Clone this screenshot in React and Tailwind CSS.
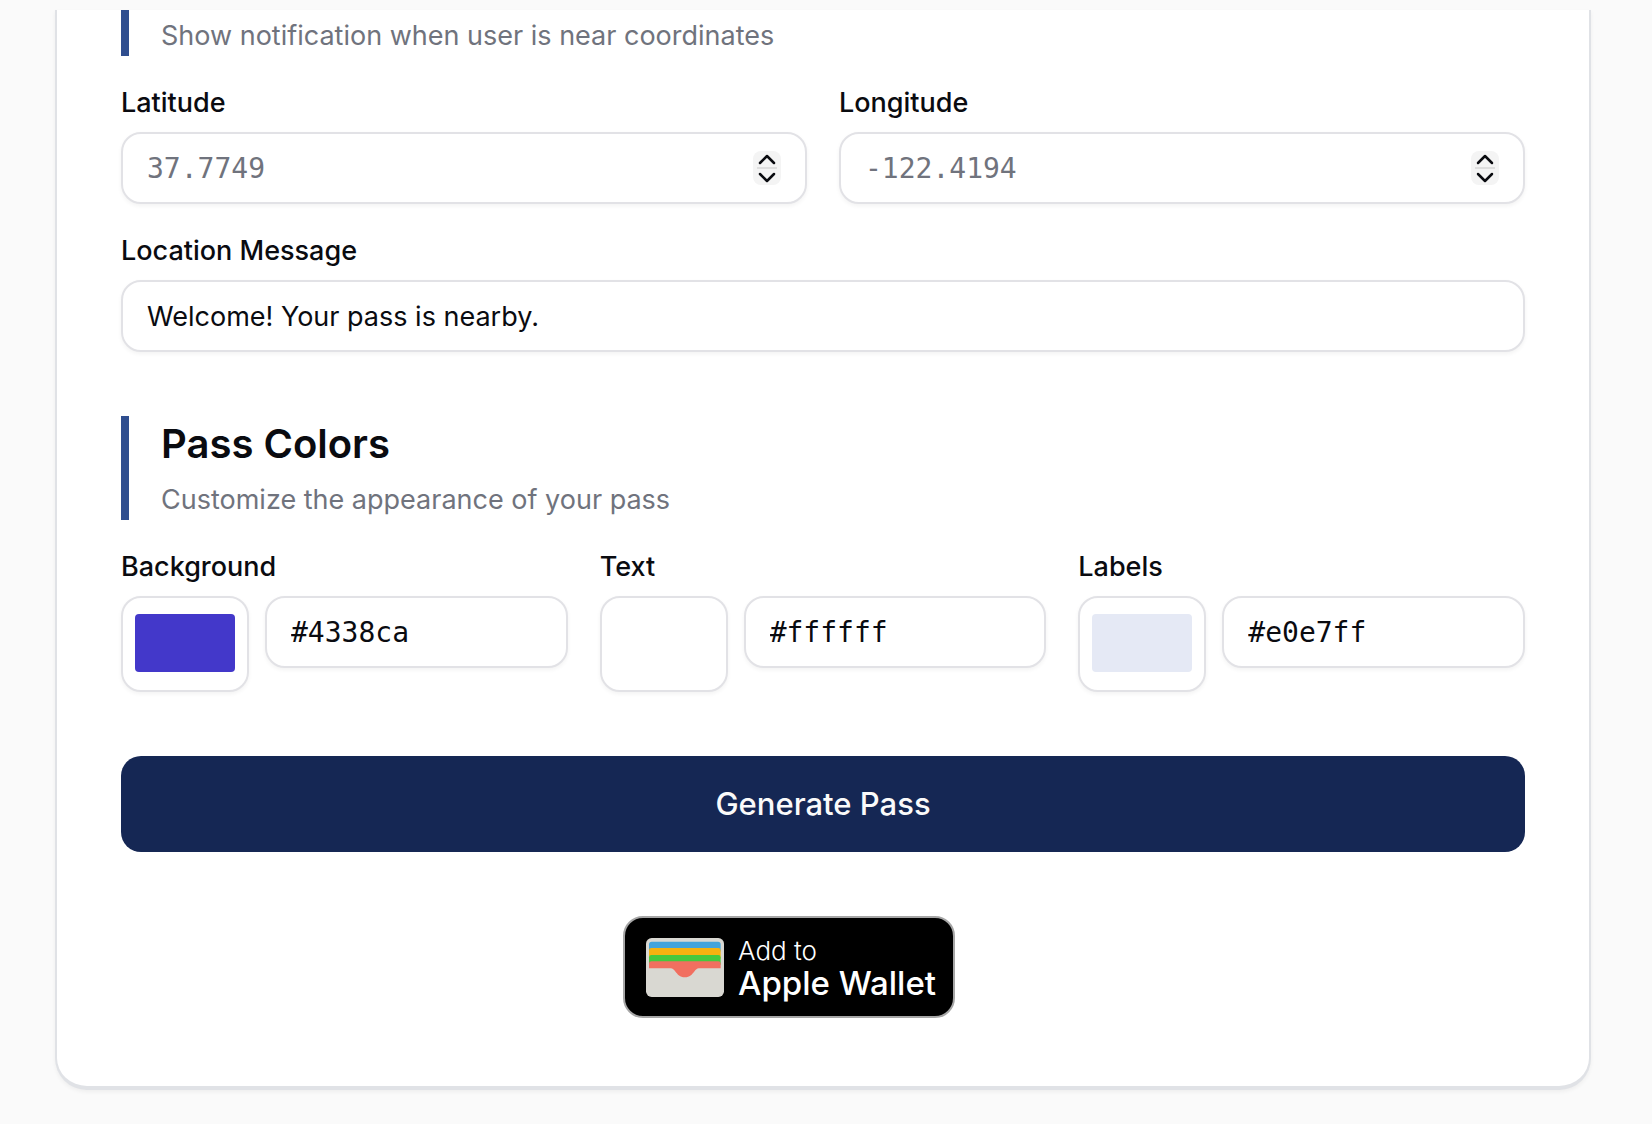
import React, { useState } from 'react';

const inputClass =
  'block h-18 w-full min-w-0 rounded-[20px] border-2 border-[#e2e2e6] bg-white px-6 text-[#0a0b10] shadow-[0_2px_4px_rgba(0,0,0,0.05)] outline-none placeholder:text-[#70737d] focus:border-[#2f4e8f]';
const monoClass = "text-[28px] font-['DejaVu_Sans_Mono',monospace]";

const COLORS = [
  { id: 'background', label: 'Background', swatch: '#4338ca', hex: '#4338ca' },
  { id: 'text', label: 'Text', swatch: '#ffffff', hex: '#ffffff' },
  { id: 'labels', label: 'Labels', swatch: '#e5e9f5', hex: '#e0e7ff' },
];

function Label({ htmlFor, children }) {
  return (
    <label
      htmlFor={htmlFor}
      className="mb-3.5 block text-[27px] leading-[30px] font-medium text-[#0a0b10]"
    >
      {children}
    </label>
  );
}

function StepButton({ label, path, onClick }) {
  return (
    <button type="button" aria-label={label} onClick={onClick} className="flex h-4 items-center justify-center">
      <svg width="18" height="11" viewBox="0 0 18 11" fill="none" aria-hidden="true">
        <path d={path} stroke="#0a0b10" strokeWidth="2.5" strokeLinecap="round" strokeLinejoin="round" />
      </svg>
    </button>
  );
}

function CoordinateField({ id, label, placeholder }) {
  const [value, setValue] = useState('');
  const step = (amount) => setValue(String(Number(value || 0) + amount));

  return (
    <div>
      <Label htmlFor={id}>{label}</Label>
      <div className="relative">
        <input
          id={id}
          type="number"
          step="any"
          value={value}
          onChange={(event) => setValue(event.target.value)}
          placeholder={placeholder}
          className={`${inputClass} ${monoClass} [appearance:textfield] [&::-webkit-inner-spin-button]:appearance-none`}
        />
        <div className="absolute inset-y-0 right-6.5 flex items-center">
          <div className="flex w-7 flex-col rounded-lg bg-[#f4f4f4]">
            <StepButton label={`Increase ${label}`} path="M2 9l7-7 7 7" onClick={() => step(1)} />
            <span className="mx-1 h-0.5 bg-[#dedede]" />
            <StepButton label={`Decrease ${label}`} path="M2 2l7 7 7-7" onClick={() => step(-1)} />
          </div>
        </div>
      </div>
    </div>
  );
}

function ColorField({ id, label, swatch, hex }) {
  const [color, setColor] = useState(swatch);
  const [text, setText] = useState(hex);

  const pick = (event) => {
    setColor(event.target.value);
    setText(event.target.value);
  };

  return (
    <div className="min-w-0">
      <Label htmlFor={`${id}-hex`}>{label}</Label>
      <div className="flex items-start gap-4">
        <input
          type="color"
          aria-label={`${label} color`}
          value={color}
          onChange={pick}
          className="h-24 w-32 shrink-0 rounded-[20px] border-2 border-[#e2e2e6] bg-white px-3 pt-4 pb-4.5 shadow-[0_2px_4px_rgba(0,0,0,0.05)] [&::-webkit-color-swatch]:rounded-sm [&::-webkit-color-swatch]:border-0 [&::-webkit-color-swatch-wrapper]:p-0"
        />
        <input
          id={`${id}-hex`}
          type="text"
          value={text}
          onChange={(event) => setText(event.target.value)}
          className={`${inputClass} ${monoClass}`}
        />
      </div>
    </div>
  );
}

function WalletIcon() {
  return (
    <svg width="78" height="59" viewBox="0 0 233 176" aria-hidden="true">
      <rect width="233" height="176" rx="17" fill="#d9d8d2" />
      <path d="M9 40V19q0-8 8-8h198q8 0 8 8v21z" fill="#43a4db" />
      <path d="M9 62V37q0-7 7-7h200q7 0 7 7v25z" fill="#f5b210" />
      <path d="M9 80V58q0-7 7-7h200q7 0 7 7v22z" fill="#45c83e" />
      <path
        d="M9 90V76q0-7 7-7h200q7 0 7 7v14h-65c-6 0-9 4-13 9-8 10-14 18-29 18s-21-8-29-18c-4-5-7-9-13-9z"
        fill="#f16f60"
      />
    </svg>
  );
}

export default function App() {
  return (
    <div className="min-h-screen bg-[#fafafa] pt-2.5 pr-[61px] pb-8 pl-[55px] font-[Inter,sans-serif] text-[#0a0b10]">
      <main className="rounded-b-[32px] border-x-2 border-b-4 border-[#e0e2e6] bg-white px-16 pb-17 shadow-[0_2px_4px_rgba(0,0,0,0.05)]">
        <form onSubmit={(event) => event.preventDefault()}>
          <section>
            <div className="mb-8 border-l-8 border-[#2f4e8f] pt-1.5 pl-8">
              <p className="text-[27px] leading-10 text-[#70737d]">
                Show notification when user is near coordinates
              </p>
            </div>
            <div className="mb-8 grid grid-cols-2 gap-8">
              <CoordinateField id="latitude" label="Latitude" placeholder="37.7749" />
              <CoordinateField id="longitude" label="Longitude" placeholder="-122.4194" />
            </div>
            <Label htmlFor="message">Location Message</Label>
            <input
              id="message"
              type="text"
              defaultValue="Welcome! Your pass is nearby."
              className={`${inputClass} text-[27px]`}
            />
          </section>

          <section className="mt-16">
            <div className="mb-8 border-l-8 border-[#2f4e8f] pl-8">
              <h2 className="mb-2 text-[40px] leading-14 font-semibold">Pass Colors</h2>
              <p className="text-[27px] leading-10 text-[#70737d]">Customize the appearance of your pass</p>
            </div>
            <div className="grid grid-cols-3 gap-8">
              {COLORS.map((color) => (
                <ColorField key={color.id} {...color} />
              ))}
            </div>
          </section>

          <button
            type="submit"
            className="mt-16 h-24 w-full rounded-[20px] bg-[#152754] text-[31px] font-medium text-[#fafafa]"
          >
            Generate Pass
          </button>
        </form>

        <div className="mt-16 flex justify-center pr-17">
          <a
            href="#wallet"
            className="flex h-[102px] w-[332px] items-center gap-3.5 rounded-[20px] border-2 border-[#a6a6a6] bg-black pl-[21px] whitespace-nowrap text-white"
          >
            <WalletIcon />
            <span>
              <span className="block text-[26px] leading-8 font-light">Add to</span>
              <span className="block text-[33px] leading-8 font-medium">Apple Wallet</span>
            </span>
          </a>
        </div>
      </main>
    </div>
  );
}
